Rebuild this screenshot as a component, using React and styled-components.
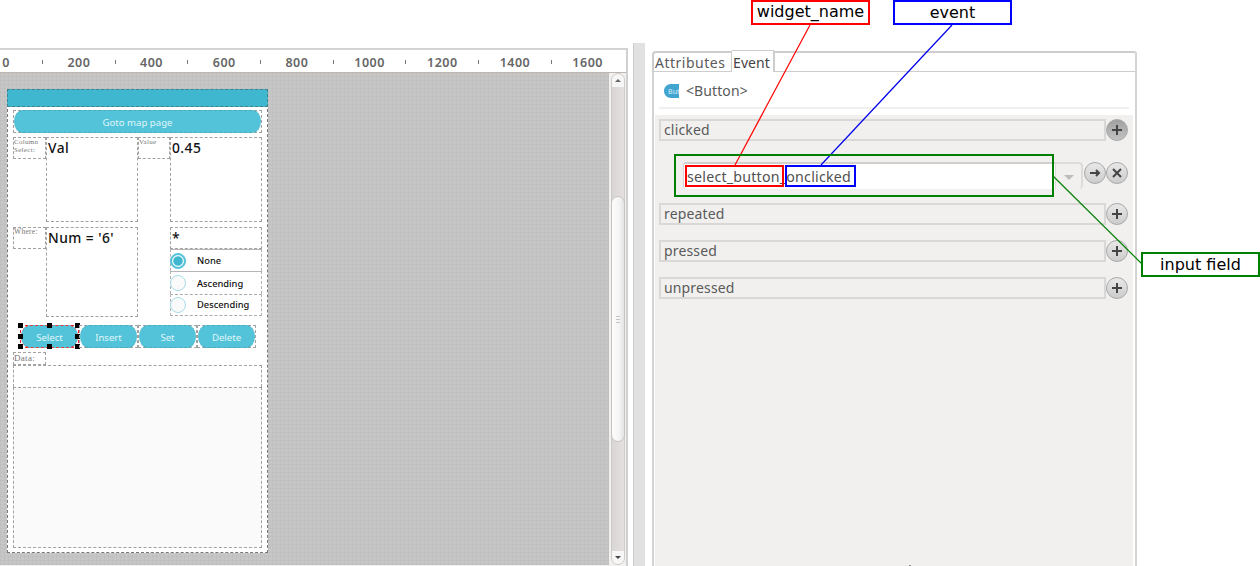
import React from 'react';
import styled, { createGlobalStyle, css } from 'styled-components';

const Global = createGlobalStyle`
  * { box-sizing: border-box; }
  body { margin: 0; background: #fff; overflow: hidden; }
`;

const Page = styled.div`
  position: relative;
  display: flex;
  width: 1260px;
  height: 566px;
  overflow: hidden;
  font-family: 'Noto Sans', 'Open Sans', sans-serif;
`;

/* ---------- design editor ---------- */
const Editor = styled.section`
  width: 628px;
  height: 518px;
  margin-top: 48px;
  border-top: 2px solid #d3d3d3;
  border-right: 2px solid #d0d0d0;
  display: flex;
  flex-direction: column;
  flex: none;
`;
const Ruler = styled.div`
  display: flex;
  flex: none;
  height: 23px;
  overflow: hidden;
  border-bottom: 1px solid #bdb6b1;
  & > :first-child { margin-left: -12px; }
`;
const Mark = styled.span`
  flex: none;
  width: 36.35px;
  display: flex;
  justify-content: center;
  align-items: center;
  padding-top: 3px;
  font: 600 12.5px 'Noto Sans', sans-serif;
  letter-spacing: 0.5px;
  color: #666;
`;
const Tick = styled.i`
  width: 1px;
  height: 4px;
  margin-bottom: 2px;
  background: #777;
`;
const Stage = styled.div`
  flex: 1;
  display: flex;
  background: #f2f1f0;
`;
const Canvas = styled.div`
  width: 609px;
  height: 492px;
  padding: 16px 0 0 7px;
  background-color: #c6c6c6;
  background-image: repeating-linear-gradient(0deg, rgba(0,0,0,.025) 0 1px, transparent 1px 4px),
    repeating-linear-gradient(90deg, rgba(0,0,0,.025) 0 1px, transparent 1px 4px);
`;
const Scroll = styled.div`
  width: 14px;
  height: 492px;
  margin-left: 2px;
  border: 1px solid #cfcbc8;
  border-radius: 7px;
  background: linear-gradient(90deg, #d9d5d4, #e4e0df);
  display: flex;
  flex-direction: column;
`;
const ScrollEnd = styled.div`
  height: 13px;
  flex: none;
  display: flex;
  align-items: center;
  justify-content: center;
  background: #f7f6f6;
  border-radius: ${p => (p.$down ? '0 0 6px 6px' : '6px 6px 0 0')};
`;
const ScrollGap = styled.div`
  height: ${p => p.$h}px;
  flex: ${p => (p.$h ? 'none' : 1)};
`;
const Thumb = styled.div`
  height: 246px;
  flex: none;
  margin: 0 -1px;
  border: 1px solid #c6c3c1;
  border-radius: 7px;
  background: linear-gradient(90deg, #fcfcfc, #f5f4f4 60%, #e4e2e2);
  display: flex;
  flex-direction: column;
  align-items: center;
  justify-content: center;
  gap: 2px;
`;
const Grip = styled.i`
  width: 4px;
  height: 1px;
  background: #c6c4c3;
`;
const Splitter = styled.div`
  flex: none;
  width: 12px;
  height: 523px;
  margin: 43px 7px 0 5px;
  background: #e1e1e1;
  border-left: 1px solid #cdcdcd;
`;

/* ---------- phone screen ---------- */
const dashed = css`
  border: 1px dashed ${p => p.$line || '#a2a2a2'};
`;
const Phone = styled.div`
  width: 261px;
  height: 464px;
  border: 1px dashed #777;
  border-top: 0;
  background: #fff;
  color: #111;
`;
const TitleBar = styled.div`
  height: 18px;
  margin: 0 -1px;
  background: #3fb8cf;
  border: 1px dashed #44818d;
`;
const Body = styled.div`
  padding: 3px 0 0 5px;
  display: flex;
  flex-direction: column;
`;
const Outline = styled.div`
  position: relative;
  width: ${p => p.$w}px;
  height: 23px;
  ${dashed}
  flex: none;
`;
const Pill = styled.div`
  height: 23px;
  margin: -1px 0;
  background: #52c3d8;
  border: 1px dashed ${p => (p.$picked ? '#e04040' : '#4daabb')};
  border-width: 1px 0;
  border-radius: 9px / 11.5px;
  color: #e0f6fa;
  font-size: 9.6px;
  line-height: 23px;
  text-align: center;
`;
const FieldRow = styled.div`
  display: flex;
  align-items: flex-start;
  height: ${p => p.$h}px;
  margin-top: ${p => p.$mt}px;
`;
const Caption = styled.div`
  width: ${p => p.$w || 33}px;
  height: ${p => p.$h || 22}px;
  ${dashed}
  flex: none;
  font-family: 'Liberation Serif', serif;
  font-size: ${p => p.$size || 7}px;
  letter-spacing: 0.3px;
  line-height: ${p => p.$lh || 8}px;
  color: #777;
  overflow: hidden;
`;
const Value = styled.div`
  width: 92px;
  height: ${p => p.$h}px;
  ${dashed}
  flex: none;
  font: 500 13.8px/19px 'Noto Sans', sans-serif;
  letter-spacing: 0.45px;
  white-space: nowrap;
  padding-left: 1px;
`;
const Options = styled.div`
  width: 92px;
  margin-left: 32px;
`;
const Option = styled.div`
  display: flex;
  align-items: center;
  gap: 11px;
  height: 22.4px;
  border: 1px dashed #b0b0b0;
  border-top: ${p => (p.$solid ? '1px solid #b5b5b5' : '1px dashed #aaa')};
  border-bottom: ${p => (p.$last ? '1px dashed #aaa' : '0')};
  font-size: 9.3px;
  font-weight: 500;
`;
const Radio = styled.i`
  width: 16px;
  height: 16px;
  margin-left: -1px;
  flex: none;
  border-radius: 50%;
  border: 1px solid ${p => (p.$on ? '#52c3d8' : '#a5dde8')};
  background: ${p => (p.$on ? 'radial-gradient(circle, #3fb8cf 0 4.2px, #d7f1f6 5px 5.6px, #52c3d8 6.4px)' : '#fafafa')};
`;
const Buttons = styled.div`
  display: flex;
  margin: 8px 0 0 7px;
`;
const Handle = styled.i`
  position: absolute;
  left: ${p => p.$x};
  top: ${p => p.$y};
  width: 5px;
  height: 5px;
  margin: -3px;
  background: #000;
`;
const Box = styled.div`
  width: 249px;
  height: ${p => p.$h}px;
  ${dashed}
  border-bottom-width: ${p => (p.$open ? 0 : 1)}px;
  background: ${p => p.$bg || '#fff'};
`;

/* ---------- property panel ---------- */
const Panel = styled.section`
  position: relative;
  width: 485px;
  height: 516px;
  margin-top: 50px;
  flex: none;
  color: #5a5a5a;
`;
const Tabs = styled.div`
  display: flex;
  height: 22px;
  font-size: 14px;
`;
const Tab = styled.div`
  width: ${p => p.$w}px;
  height: ${p => (p.$active ? 22 : 21)}px;
  margin-top: ${p => (p.$active ? 0 : 1)}px;
  border: 1px solid #cdcdcd;
  border-width: ${p => (p.$active ? '1px 2px 0 1px' : '2px 0 1px 2px')};
  border-radius: ${p => (p.$active ? '2px 2px 0 0' : '4px 0 0 0')};
  line-height: ${p => (p.$active ? 23 : 19)}px;
  padding-left: 1px;
  letter-spacing: ${p => (p.$active ? 0.1 : 0.5)}px;
  color: ${p => (p.$active ? '#444' : '#5a5a5a')};
  white-space: nowrap;
`;
const TabFill = styled.div`
  flex: 1;
  height: 21px;
  margin-top: 1px;
  border-top: 2px solid #cdcdcd;
  border-right: 2px solid #d3d3d3;
  border-radius: 0 3px 0 0;
  display: flex;
  align-items: flex-end;
  &::after { content: ''; width: 100%; height: 1px; background: #cdcdcd; }
`;
const PanelBody = styled.div`
  height: 494px;
  border: 2px solid #d3d3d3;
  border-width: 0 2px;
`;
const Title = styled.div`
  display: flex;
  align-items: center;
  gap: 7px;
  height: 37px;
  margin: 0 6px 6px 5px;
  padding: 2px 0 0 5px;
  border-bottom: 2px solid #f0f0f0;
  font-size: 14px;
  letter-spacing: 0.1px;
`;
const List = styled.div`
  height: 451px;
  margin: 0 2px 0 1px;
  padding: 4px 4px 0;
  background: #f1f0ef;
`;
const EventRow = styled.div`
  display: flex;
  height: 22px;
  margin-bottom: ${p => p.$gap || 15}px;
`;
const EventName = styled.div`
  width: 447px;
  height: 22px;
  border: 2px solid #d9d8d7;
  padding-left: 3px;
  font-size: 14px;
  letter-spacing: 0.15px;
  line-height: 17px;
`;
const HandlerRow = styled.div`
  display: flex;
  height: 27px;
  margin: 0 0 14px 24px;
`;
const Input = styled.div`
  width: 372px;
  height: 27px;
  padding-left: 3px;
  border-top: 2px solid #d0cfce;
  border-left: 1px solid #d5d4d3;
  border-radius: 3px 0 0 3px;
  background: #fff;
  font-size: 14.2px;
  letter-spacing: 0.23px;
  line-height: 25px;
  color: #505050;
`;
const Drop = styled.div`
  width: 28px;
  height: 27px;
  margin-right: 1px;
  border: 1px solid #dddcdb;
  border-width: 2px 2px 0 1px;
  border-radius: 0 4px 4px 0;
  display: flex;
  align-items: center;
  justify-content: center;
  padding-top: 2px;
`;
const Round = styled.span`
  width: 22px;
  height: 22px;
  flex: none;
  border-radius: 50%;
  border: 1.5px solid #a9a9a9;
  background: ${p => (p.$dark ? 'linear-gradient(#a0a0a0, #c2c2c2)' : 'linear-gradient(#e8e8e8, #cccccc)')};
  display: flex;
  align-items: center;
  justify-content: center;
`;
const BottomMark = styled.i`
  position: absolute;
  left: 257px;
  bottom: 0;
  width: 2px;
  height: 1px;
  background: #888;
`;

/* ---------- annotations over the screen ---------- */
const Note = styled.div`
  position: absolute;
  left: ${p => p.$x}px;
  top: ${p => p.$y}px;
  width: ${p => p.$w}px;
  height: ${p => p.$h}px;
  border: 2px solid ${p => p.$c};
  background: ${p => (p.children ? '#fff' : 'transparent')};
  font: 16px/${p => p.$lh || 21}px 'DejaVu Sans', sans-serif;
  color: #000;
  text-align: center;
  white-space: nowrap;
`;
const Lines = styled.svg`
  position: absolute;
  left: 0;
  top: 0;
`;

const glyphs = {
  plus: 'M7 2v10M2 7h10',
  cross: 'M3 3l8 8M11 3l-8 8',
  arrow: 'M2 7h9M8 4l3 3-3 3',
};
const RoundButton = ({ glyph, dark }) => (
  <Round $dark={dark}>
    <svg width="14" height="14" viewBox="0 0 14 14" fill="none" stroke="#444" strokeWidth="2">
      <path d={glyphs[glyph]} />
    </svg>
  </Round>
);
const Event = ({ name, gap, dark }) => (
  <EventRow $gap={gap}>
    <EventName>{name}</EventName>
    <RoundButton glyph="plus" dark={dark} />
  </EventRow>
);
const Triangle = ({ up, size, color }) => (
  <svg width={size} height={size / 2} viewBox="0 0 10 5">
    <path d={up ? 'M0 5L5 0L10 5Z' : 'M0 0H10L5 5Z'} fill={color} />
  </svg>
);
const handles = [
  ['0px', '0px'], ['50%', '0px'], ['100%', '0px'],
  ['0px', '50%'], ['100%', '50%'],
  ['0px', '100%'], ['50%', '100%'], ['100%', '100%'],
];
const marks = Array.from({ length: 17 }, (_, i) => i);

export default function App() {
  return (
    <>
      <Global />
      <Page>
        <Editor>
          <Ruler>
            {marks.map(i => <Mark key={i}>{i % 2 ? <Tick /> : i * 100}</Mark>)}
          </Ruler>
          <Stage>
            <Canvas>
              <Phone>
                <TitleBar />
                <Body>
                  <Outline $w={249}><Pill>Goto map page</Pill></Outline>
                  <FieldRow $h={86} $mt={4}>
                    <Caption>Column<br />Select:</Caption>
                    <Value $h={85}>Val</Value>
                    <Caption $w={32}>Value</Caption>
                    <Value $h={85}>0.45</Value>
                  </FieldRow>
                  <FieldRow $h={90} $mt={4}>
                    <Caption $size={7.5}>Where:</Caption>
                    <Value $h={90}>Num = '6'</Value>
                    <Options>
                      <Value $h={22}>*</Value>
                      <Option $solid><Radio $on />None</Option>
                      <Option $solid><Radio />Ascending</Option>
                      <Option $last><Radio />Descending</Option>
                    </Options>
                  </FieldRow>
                  <Buttons>
                    <Outline $w={59} $line="#f02020">
                      <Pill $picked>Select</Pill>
                      {handles.map(([x, y]) => <Handle key={x + y} $x={x} $y={y} />)}
                    </Outline>
                    <Outline $w={59}><Pill>Insert</Pill></Outline>
                    <Outline $w={59}><Pill>Set</Pill></Outline>
                    <Outline $w={59}><Pill>Delete</Pill></Outline>
                  </Buttons>
                  <FieldRow $h={13} $mt={4}>
                    <Caption $h={13} $size={9} $lh={11}>Data:</Caption>
                  </FieldRow>
                  <Box $h={22} $open />
                  <Box $h={161} $bg="#fafafa" />
                </Body>
              </Phone>
            </Canvas>
            <Scroll>
              <ScrollEnd><Triangle up size={6} color="#666" /></ScrollEnd>
              <ScrollGap $h={109} />
              <Thumb><Grip /><Grip /><Grip /></Thumb>
              <ScrollGap />
              <ScrollEnd $down><Triangle size={6} color="#444" /></ScrollEnd>
            </Scroll>
          </Stage>
        </Editor>
        <Splitter />
        <Panel>
          <Tabs>
            <Tab $w={79}>Attributes</Tab>
            <Tab $w={44} $active>Event</Tab>
            <TabFill />
          </Tabs>
          <PanelBody>
            <Title>
              <svg width="15" height="14" viewBox="0 0 15 14">
                <path d="M15 0H7C3 0 0 3 0 7s3 7 7 7h8Z" fill="#42a5d0" />
                <text x="4" y="9.5" fontSize="7" fill="#d5edf6" fontFamily="Noto Sans">But</text>
              </svg>
              &lt;Button&gt;
            </Title>
            <List>
              <Event name="clicked" gap={21} dark />
              <HandlerRow>
                <Input>select_button_onclicked</Input>
                <Drop><Triangle size={10} color="#bdbcbb" /></Drop>
                <RoundButton glyph="arrow" />
                <RoundButton glyph="cross" />
              </HandlerRow>
              <Event name="repeated" />
              <Event name="pressed" />
              <Event name="unpressed" />
            </List>
          </PanelBody>
          <BottomMark />
        </Panel>
        <Lines width="1260" height="566" fill="none" strokeWidth="1.2">
          <path d="M810 25L735 165" stroke="#f00" />
          <path d="M952 25L821 165" stroke="#00e" />
          <path d="M1053 176L1142 264" stroke="#008000" />
        </Lines>
        <Note $x={674} $y={154} $w={380} $h={43} $c="#008000" />
        <Note $x={685} $y={165} $w={99} $h={22} $c="#f00" />
        <Note $x={785} $y={165} $w={71} $h={22} $c="#00f" />
        <Note $x={751} $y={0} $w={119} $h={25} $c="#f00" $lh={20}>widget_name</Note>
        <Note $x={893} $y={0} $w={119} $h={25} $c="#00f" $lh={22}>event</Note>
        <Note $x={1141} $y={252} $w={119} $h={25} $c="#008000">input field</Note>
      </Page>
    </>
  );
}
